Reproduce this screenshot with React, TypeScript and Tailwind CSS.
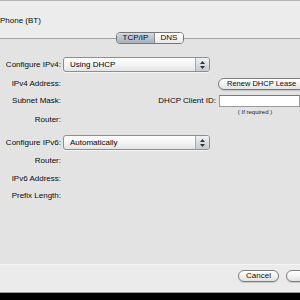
import type { ReactNode } from 'react'

const font = { fontFamily: '"Liberation Sans", Arial, sans-serif' }

function Label({ children, h }: { children: ReactNode; h: string }) {
  return (
    <div className={`flex w-[61px] shrink-0 items-center justify-end ${h}`}>
      <span className="whitespace-nowrap text-[8px] leading-none text-[#0a0a0a]">{children}</span>
    </div>
  )
}

function Popup({ value }: { value: string }) {
  return (
    <div className="ml-[2px] flex h-[15px] w-[147px] overflow-hidden rounded-[3px] border border-[#8e8e8e] bg-gradient-to-b from-[#ffffff] via-[#f4f4f4] to-[#e4e4e4] shadow-[0_1px_0_rgba(255,255,255,0.6)]">
      <div className="flex flex-1 items-center pl-[6px] text-[8px] leading-none text-[#000]">{value}</div>
      <div className="flex w-[14px] flex-col items-center justify-center gap-[2px] border-l border-[#a9a9a9] bg-gradient-to-b from-[#f0f2f5] via-[#d9dde3] to-[#c8ccd2]">
        <svg width="5" height="3" viewBox="0 0 5 3">
          <path d="M2.5 0 L5 3 L0 3 Z" fill="#333" />
        </svg>
        <svg width="5" height="3" viewBox="0 0 5 3">
          <path d="M0 0 L5 0 L2.5 3 Z" fill="#333" />
        </svg>
      </div>
    </div>
  )
}

function PillButton({ children, className }: { children?: ReactNode; className: string }) {
  return (
    <div
      className={`flex items-center rounded-full border border-[#7d7d7d] bg-gradient-to-b from-[#ffffff] via-[#f3f3f3] to-[#e2e2e2] leading-none text-[#0a0a0a] shadow-[0_1px_1px_rgba(0,0,0,0.15)] ${className}`}
    >
      {children}
    </div>
  )
}

export default function App() {
  return (
    <div className="flex h-[300px] w-[300px] flex-col overflow-hidden bg-black" style={font}>
      <div className="h-[38px] shrink-0 border-t border-[#b4b4b4] bg-[#ececec]">
        <div className="pt-[16px] text-[8px] leading-none text-[#0a0a0a]">Phone (BT)</div>
      </div>

      <div className="h-[226px] shrink-0 border-t border-[#a3a3a3] bg-[#e3e3e3]">
        <div className="-mt-[7px] flex justify-center">
          <div className="flex h-[12px] overflow-hidden rounded-[4px] border border-[#777] text-[8px] leading-none text-[#0a0a0a]">
            <div className="flex w-[38px] items-center justify-center border-r border-[#888] bg-gradient-to-b from-[#d4dbe4] via-[#b9c2ce] to-[#a9b3c0]">
              TCP/IP
            </div>
            <div className="flex w-[28px] items-center justify-center bg-gradient-to-b from-[#ffffff] to-[#e9e9e9]">
              DNS
            </div>
          </div>
        </div>

        <div className="mt-[13px] flex items-center">
          <Label h="h-[15px]">Configure IPv4:</Label>
          <Popup value="Using DHCP" />
        </div>

        <div className="mt-[6px] flex items-center">
          <Label h="h-[12px]">IPv4 Address:</Label>
          <PillButton className="ml-[157px] h-[12px] w-[92px] shrink-0 whitespace-nowrap pl-[8px] text-[7.5px]">
            Renew DHCP Lease
          </PillButton>
        </div>

        <div className="mt-[5px] flex items-start">
          <Label h="h-[12px]">Subnet Mask:</Label>
          <div className="flex flex-1 items-start justify-end">
            <div className="flex h-[12px] items-center pr-[3px] text-[8px] leading-none text-[#0a0a0a]">DHCP Client ID:</div>
            <div className="flex w-[81px] shrink-0 flex-col">
              <div className="h-[12px] border border-[#9a9a9a] border-t-[#7a7a7a] bg-white" />
              <div className="mt-[2px] w-[72px] text-center text-[6px] leading-none text-[#222]">( If required )</div>
            </div>
          </div>
        </div>

        <div className="flex items-center">
          <Label h="h-[10px]">Router:</Label>
        </div>

        <div className="mt-[10px] flex items-center">
          <Label h="h-[15px]">Configure IPv6:</Label>
          <Popup value="Automatically" />
        </div>

        <div className="mt-[6px] flex items-center">
          <Label h="h-[10px]">Router:</Label>
        </div>
        <div className="mt-[8px] flex items-center">
          <Label h="h-[10px]">IPv6 Address:</Label>
        </div>
        <div className="mt-[7px] flex items-center">
          <Label h="h-[10px]">Prefix Length:</Label>
        </div>
      </div>

      <div className="h-[28px] shrink-0 border-t border-[#f4f4f4] bg-[#ebebeb]">
        <div className="flex gap-[7px] pl-[238px] pt-[5px]">
          <PillButton className="h-[12px] w-[41px] shrink-0 justify-center text-[8px]">Cancel</PillButton>
          <PillButton className="h-[12px] w-[41px] shrink-0" />
        </div>
      </div>
      <div className="h-[1px] shrink-0 bg-[#9c9c9c]" />
    </div>
  )
}
